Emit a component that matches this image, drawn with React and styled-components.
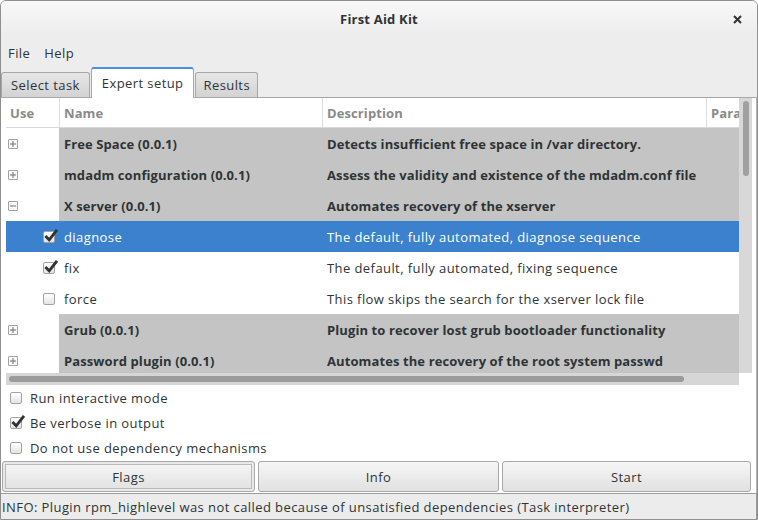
import React from 'react';
import styled, { createGlobalStyle } from 'styled-components';

const FONT = `"Open Sans", "DejaVu Sans", sans-serif`;

const Global = createGlobalStyle`
  html, body { margin: 0; padding: 0; background: #ffffff; }
  body { font-family: ${FONT}; font-size: 13px; color: #2e3436; letter-spacing: 0.42px; }
  * { box-sizing: border-box; }
`;

const Window = styled.div`
  width: 758px;
  height: 520px;
  display: flex;
  flex-direction: column;
  background: #ededed;
  border: 1px solid #8f8f8f;
  border-radius: 6px 6px 0 0;
  overflow: hidden;
`;

const TitleBar = styled.div`
  height: 36px;
  flex: none;
  display: grid;
  grid-template-columns: 1fr auto 1fr;
  align-items: center;
  background: linear-gradient(#f8f8f8, #ededed 92%);
`;

const Title = styled.div`
  grid-column: 2;
  font-weight: bold;
  font-size: 13px;
  letter-spacing: 0.2px;
  color: #2e3436;
`;

const CloseBtn = styled.div`
  justify-self: end;
  margin-right: 15px;
  display: flex;
`;

const MenuBar = styled.div`
  height: 31px;
  flex: none;
  display: flex;
  align-items: center;
  padding-left: 7px;
  gap: 14px;
`;

const MenuItem = styled.span`
  font-size: 13px;
`;

const TabStrip = styled.div`
  height: 29px;
  flex: none;
  display: flex;
  align-items: flex-end;
  gap: 1px;
  position: relative;
  z-index: 1;
`;

const Tab = styled.div`
  height: ${p => (p.$active ? '31px' : '25px')};
  margin-bottom: ${p => (p.$active ? '-1px' : '0')};
  padding: 0 ${p => p.$pad}px ${p => (p.$active ? '2px' : '0')};
  display: flex;
  align-items: center;
  border: 1px solid #a7a7a7;
  border-bottom: none;
  border-top: ${p => (p.$active ? '2px solid #4a90d9' : '1px solid #a7a7a7')};
  border-radius: 3px 3px 0 0;
  background: ${p => (p.$active ? '#ffffff' : 'linear-gradient(#e6e6e6, #d3d3d3)')};
  color: #2e3436;
  font-size: 13px;
`;

const Page = styled.div`
  flex: none;
  display: flex;
  flex-direction: column;
  background: #ffffff;
  border-top: 1px solid #a9a9a9;
  border-right: 1px solid #b5b5b5;
  padding-bottom: 1px;
`;

const TreeFrame = styled.div`
  margin: 0 3px 0 5px;
  height: 287px;
  display: grid;
  grid-template-columns: 733px 13px;
  grid-template-rows: 275px 12px;
`;

const Viewport = styled.div`
  overflow: hidden;
`;

const Grid = styled.div`
  display: grid;
  grid-template-columns: 53px 263px 384px 120px;
  height: ${p => p.$h}px;
  background: ${p => (p.$selected ? '#3b81cd' : 'transparent')};
  color: ${p => (p.$selected ? '#ffffff' : '#2e3436')};
  border-bottom: ${p => (p.$header ? '1px solid #d9d9d9' : 'none')};
`;

const HeadCell = styled.div`
  display: flex;
  align-items: center;
  padding-left: 4px;
  font-weight: bold;
  letter-spacing: 0.1px;
  color: #8a8a8a;
  border-left: ${p => (p.$first ? 'none' : '1px solid #dedede')};
  white-space: nowrap;
  overflow: hidden;
`;

const Cell = styled.div`
  display: flex;
  align-items: center;
  padding-left: ${p => p.$pad ?? 5}px;
  background: ${p => (p.$shaded ? '#c4c4c4' : 'transparent')};
  font-weight: ${p => (p.$bold ? 'bold' : 'normal')};
  letter-spacing: ${p => (p.$bold ? '0.1px' : '0.42px')};
  white-space: nowrap;
  overflow: hidden;
`;

const Expander = styled.div`
  width: 10px;
  height: 10px;
  border: 1px solid #a2a2a2;
  border-radius: 1px;
  background: #fafafa;
  display: flex;
  align-items: center;
  justify-content: center;
`;

const CheckWrap = styled.div`
  position: relative;
  width: 12px;
  height: 12px;
  flex: none;
`;

const CheckBoxFace = styled.div`
  width: 12px;
  height: 12px;
  border: 1px solid #a3a3a3;
  border-radius: 2px;
  background: linear-gradient(#ffffff, #e4e4e4);
`;

const CheckMark = styled.svg`
  position: absolute;
  left: 1px;
  top: -3px;
  overflow: visible;
`;

const VTrough = styled.div`
  background: #d8d8d8;
  padding: 3px 3px 0 4px;
`;

const VThumb = styled.div`
  width: 6px;
  height: 75px;
  border-radius: 3px;
  background: #a0a0a0;
`;

const HTrough = styled.div`
  background: #d6d6d6;
  padding: 3px 0 0 3px;
`;

const HThumb = styled.div`
  width: 675px;
  height: 6px;
  border-radius: 3px;
  background: #9b9b9b;
`;

const Options = styled.div`
  display: flex;
  flex-direction: column;
  padding-left: 9px;
  height: 75px;
`;

const OptionRow = styled.label`
  height: 25px;
  display: flex;
  align-items: center;
  gap: 8px;
  font-size: 13px;
`;

const ButtonRow = styled.div`
  margin-top: 1px;
  display: grid;
  grid-template-columns: 253px 241px 249px;
  column-gap: 3px;
  padding-left: 1px;
`;

const Button = styled.div`
  height: 31px;
  display: flex;
  align-items: center;
  justify-content: center;
  border: 1px solid #a8a8a8;
  border-radius: 3px;
  background: linear-gradient(#f6f6f6, #e1e1e1);
  box-shadow: ${p => (p.$focus ? 'inset 0 0 0 2px #e9e9e9, inset 0 0 0 3px #b9b9b9' : 'none')};
  color: #2e3436;
  font-size: 13px;
  padding-top: 1px;
`;

const StatusBar = styled.div`
  flex: 1;
  display: flex;
  align-items: center;
  padding-left: 1px;
  border-top: 1px solid #9c9c9c;
  border-right: 1px solid #9c9c9c;
  background: #ececec;
  font-size: 13px;
  white-space: nowrap;
`;

function CheckBox({ checked }) {
  return (
    <CheckWrap>
      <CheckBoxFace />
      {checked && (
        <CheckMark width="14" height="14" viewBox="0 0 14 14">
          <path d="M1.4 8 L5.2 11.8 L13 1.8" fill="none" stroke="#2e3436" strokeWidth="2.8" strokeLinecap="butt" strokeLinejoin="miter" />
        </CheckMark>
      )}
    </CheckWrap>
  );
}

function ExpanderBox({ open }) {
  return (
    <Expander>
      <svg width="8" height="8" viewBox="0 0 8 8">
        <path d="M1 4 H7" stroke="#6f6f6f" strokeWidth="1" />
        {!open && <path d="M4 1 V7" stroke="#6f6f6f" strokeWidth="1" />}
      </svg>
    </Expander>
  );
}

const rows = [
  { type: 'plugin', name: 'Free Space (0.0.1)', desc: 'Detects insufficient free space in /var directory.' },
  { type: 'plugin', name: 'mdadm configuration (0.0.1)', desc: 'Assess the validity and existence of the mdadm.conf file' },
  { type: 'plugin', open: true, name: 'X server (0.0.1)', desc: 'Automates recovery of the xserver' },
  { type: 'flow', checked: true, selected: true, name: 'diagnose', desc: 'The default, fully automated, diagnose sequence' },
  { type: 'flow', checked: true, name: 'fix', desc: 'The default, fully automated, fixing sequence' },
  { type: 'flow', checked: false, name: 'force', desc: 'This flow skips the search for the xserver lock file' },
  { type: 'plugin', name: 'Grub (0.0.1)', desc: 'Plugin to recover lost grub bootloader functionality' },
  { type: 'plugin', name: 'Password plugin (0.0.1)', desc: 'Automates the recovery of the root system passwd' },
];

const options = [
  { label: 'Run interactive mode', checked: false },
  { label: 'Be verbose in output', checked: true },
  { label: 'Do not use dependency mechanisms', checked: false },
];

export default function App() {
  return (
    <>
      <Global />
      <Window>
        <TitleBar>
          <Title>First Aid Kit</Title>
          <CloseBtn>
            <svg width="9" height="9" viewBox="0 0 9 9">
              <path d="M1 1 L8 8 M8 1 L1 8" stroke="#2e3436" strokeWidth="2" />
            </svg>
          </CloseBtn>
        </TitleBar>
        <MenuBar>
          <MenuItem>File</MenuItem>
          <MenuItem>Help</MenuItem>
        </MenuBar>
        <TabStrip>
          <Tab $pad={9}>Select task</Tab>
          <Tab $active $pad={10}>Expert setup</Tab>
          <Tab $pad={7}>Results</Tab>
        </TabStrip>
        <Page>
          <TreeFrame>
            <Viewport>
              <Grid $header $h={30}>
                <HeadCell $first>Use</HeadCell>
                <HeadCell>Name</HeadCell>
                <HeadCell>Description</HeadCell>
                <HeadCell>Parameters</HeadCell>
              </Grid>
              {rows.map((r, i) =>
                r.type === 'plugin' ? (
                  <Grid key={i} $h={31}>
                    <Cell $pad={2}><ExpanderBox open={r.open} /></Cell>
                    <Cell $shaded $bold>{r.name}</Cell>
                    <Cell $shaded $bold>{r.desc}</Cell>
                    <Cell $shaded />
                  </Grid>
                ) : (
                  <Grid key={i} $h={31} $selected={r.selected}>
                    <Cell $pad={37}><CheckBox checked={r.checked} /></Cell>
                    <Cell>{r.name}</Cell>
                    <Cell>{r.desc}</Cell>
                    <Cell />
                  </Grid>
                )
              )}
            </Viewport>
            <VTrough><VThumb /></VTrough>
            <HTrough><HThumb /></HTrough>
            <div />
          </TreeFrame>
          <Options>
            {options.map(o => (
              <OptionRow key={o.label}>
                <CheckBox checked={o.checked} />
                {o.label}
              </OptionRow>
            ))}
          </Options>
          <ButtonRow>
            <Button $focus>Flags</Button>
            <Button>Info</Button>
            <Button>Start</Button>
          </ButtonRow>
        </Page>
        <StatusBar>INFO: Plugin rpm_highlevel was not called because of unsatisfied dependencies (Task interpreter)</StatusBar>
      </Window>
    </>
  );
}
